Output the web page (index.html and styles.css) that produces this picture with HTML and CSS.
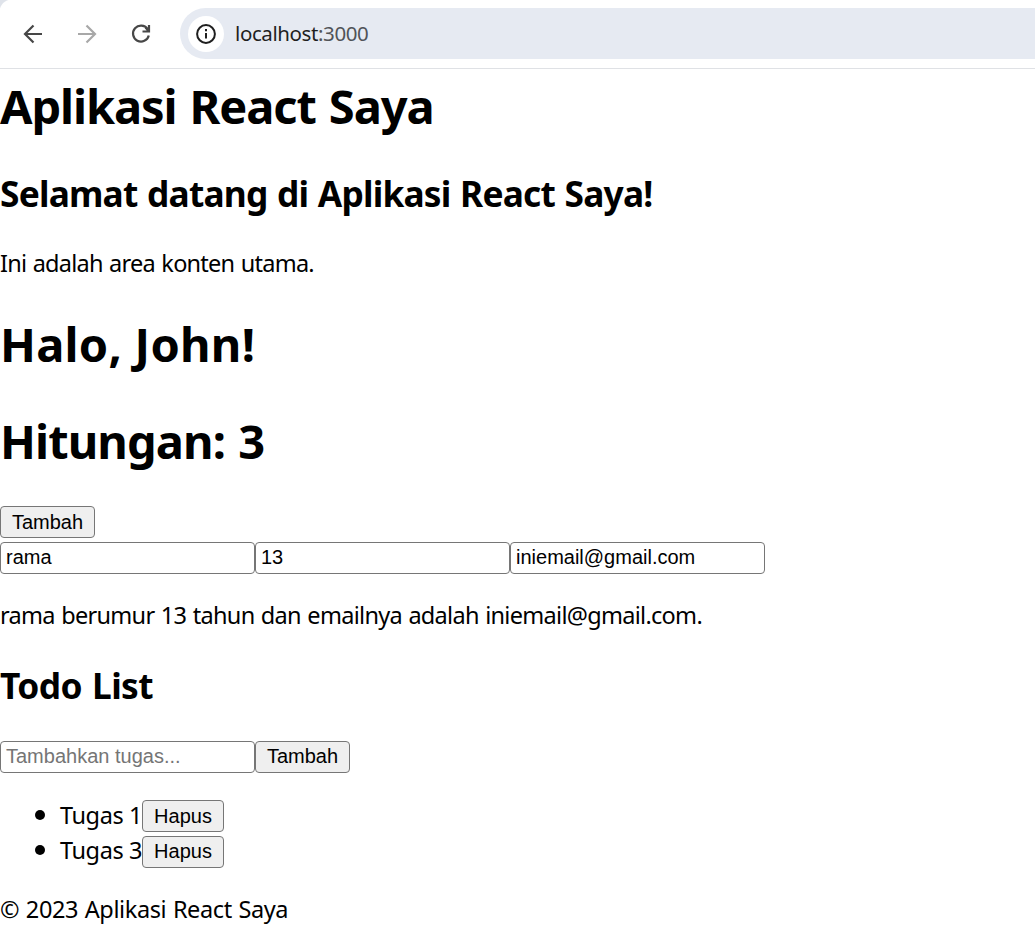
FILE: index.html
```html
<!DOCTYPE html>
<html lang="id">
<head>
<meta charset="utf-8">
<title>Aplikasi React Saya</title>
<link rel="stylesheet" href="styles.css">
</head>
<body>
<div class="toolbar">
  <svg class="nav-icons" width="180" height="68" viewBox="0 0 180 68" fill="none" stroke-width="2.200">
    <path d="M42 34H25M33.500 25.500L25 34l8.500 8.500" stroke="#474747"/>
    <path d="M78 34H95M86.500 25.500L95 34l-8.500 8.500" stroke="#a8a8a8"/>
    <path d="M147.600 29A8 8 0 1 0 148.800 35.500" stroke="#474747"/>
    <path d="M149 25v6.500h-6.500M149 31.500l-3.500-4" stroke="#474747"/>
  </svg>
  <div class="address">
    <span class="site-info">
      <svg width="22" height="22" viewBox="0 0 22 22" fill="none" stroke="#1f1f1f" stroke-width="2">
        <circle cx="11" cy="11" r="8.900"/><path d="M11 10v5.500M11 6v2.200"/>
      </svg>
    </span>
    <span class="url">localhost<span class="port">:3000</span></span>
  </div>
</div>
<main class="app">
  <h1 class="title">Aplikasi React Saya</h1>
  <h2 class="welcome">Selamat datang di Aplikasi React Saya!</h2>
  <p class="intro">Ini adalah area konten utama.</p>
  <h1 class="greeting">Halo, John!</h1>
  <h1 class="counter">Hitungan: 3</h1>
  <button class="button">Tambah</button>
  <div class="fields"><input class="field" value="rama"><input class="field" value="13"><input class="field" value="iniemail@gmail.com"></div>
  <p class="summary">rama berumur 13 tahun dan emailnya adalah iniemail@gmail.com.</p>
  <h2 class="todo-title">Todo List</h2>
  <div class="todo-form"><input class="field" placeholder="Tambahkan tugas..."><button class="button">Tambah</button></div>
  <ul class="todos">
    <li class="todo"><span class="task">Tugas 1</span><button class="button remove">Hapus</button></li>
    <li class="todo"><span class="task">Tugas 3</span><button class="button remove">Hapus</button></li>
  </ul>
  <p class="footer">© 2023 Aplikasi React Saya</p>
</main>
</body>
</html>
```
FILE: styles.css
```css
* { box-sizing: border-box; }
body { margin: 0; height: 931px; overflow: hidden; background: #fff; color: #000; font-family: "Noto Sans", sans-serif; font-size: 23.5px; line-height: 32px; }
h1, h2, p, ul { margin: 0; white-space: nowrap; }
h1 { font-size: 47px; line-height: 64px; }
h2 { font-size: 35.3px; line-height: 48px; }
.toolbar { display: flex; height: 69px; border-bottom: 1px solid #dfe1e5; background: radial-gradient(circle at 12px 12px, transparent 12px, #dfe3ea 13px) 0 0 / 12px 12px no-repeat; }
.nav-icons { flex: none; }
.address { display: flex; flex: 1; align-items: center; height: 51px; margin-top: 8px; padding-left: 8px; border-radius: 26px 0 0 26px; background: #e6eaf2; }
.site-info { display: flex; align-items: center; justify-content: center; width: 36px; height: 36px; border-radius: 50%; background: #fff; }
.url { margin: -2px 0 0 11px; font-size: 20.5px; color: #1f1f1f; letter-spacing: -0.4px; }
.port { color: #505358; }
.app { display: flow-root; }
.title { margin-top: 5px; letter-spacing: -1.1px; word-spacing: 2px; }
.welcome { margin-top: 31px; letter-spacing: -0.8px; word-spacing: 1.2px; }
.intro { margin-top: 30px; letter-spacing: -0.75px; word-spacing: 1px; }
.greeting { margin-top: 33px; letter-spacing: 0.25px; }
.counter { margin-top: 33px; letter-spacing: -0.9px; word-spacing: 2px; }
.app > .button { margin-top: 33px; }
.button { display: block; flex: none; width: 95px; height: 32px; padding: 0; border: 1px solid #767676; border-radius: 4px; background: #efefef; color: #000; font: 20px/28px "Liberation Sans", Arial, sans-serif; }
.fields { display: flex; margin-top: 4px; }
.field { flex: none; width: 255px; height: 32px; padding: 0 5px 2px; border: 1px solid #767676; border-radius: 4px; background: #fff; color: #000; font: 20px "Liberation Sans", Arial, sans-serif; }
.field::placeholder { color: #757575; }
.summary { margin-top: 25px; letter-spacing: -0.7px; word-spacing: 1px; }
.todo-title { margin-top: 30px; letter-spacing: -0.6px; word-spacing: 1.5px; }
.todo-form { display: flex; margin-top: 32px; }
.todo-form .button { padding-bottom: 2px; }
.todos { display: grid; gap: 4px; margin-top: 27px; padding: 0; list-style: none; }
.todo { display: flex; align-items: center; height: 32px; padding-left: 35px; }
.todo::before { content: ""; width: 10px; height: 10px; margin: -2px 15px 0 0; border-radius: 50%; background: #000; }
.task { width: 82px; margin-top: -2px; letter-spacing: -0.4px; }
.todo:last-child .task, .todo:last-child::before { margin-top: -4px; }
.todo:last-child .button { padding-bottom: 2px; }
.remove { width: 82px; }
.footer { margin-top: 25px; letter-spacing: -0.4px; word-spacing: 1px; }
```
